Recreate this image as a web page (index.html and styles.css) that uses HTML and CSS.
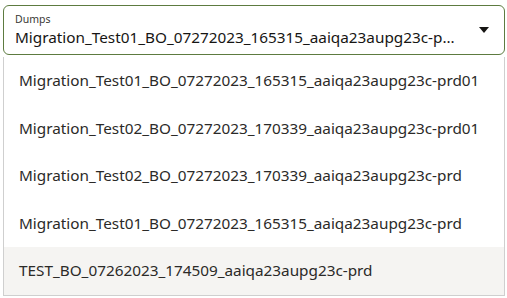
FILE: index.html
```html
<!DOCTYPE html>
<html lang="en">
<head>
    <meta charset="UTF-8">
    <title>Dumps</title>
    <link rel="stylesheet" href="styles.css">
</head>
<body>
    <!-- Campo select abierto -->
    <div class="select-field">
        <div class="select-text">
            <span class="select-label">Dumps</span>
            <span class="select-value">Migration_Test01_BO_07272023_165315_aaiqa23aupg23c-prd01</span>
        </div>
        <svg class="select-arrow" width="12" height="8" viewBox="0 0 12 8">
            <path d="M1 1 L11 1 L6 7 Z" fill="#161513"/>
        </svg>
    </div>

    <ul class="dropdown">
        <li>Migration_Test01_BO_07272023_165315_aaiqa23aupg23c-prd01</li>
        <li>Migration_Test02_BO_07272023_170339_aaiqa23aupg23c-prd01</li>
        <li>Migration_Test02_BO_07272023_170339_aaiqa23aupg23c-prd</li>
        <li>Migration_Test01_BO_07272023_165315_aaiqa23aupg23c-prd</li>
        <li class="active">TEST_BO_07262023_174509_aaiqa23aupg23c-prd</li>
    </ul>
</body>
</html>
```

FILE: styles.css
```css
body {
    margin: 0;
    padding: 5px 2px 0 3px;
    font-family: "Noto Sans", sans-serif;
    color: #161513;
    background-color: #fff;
}

.select-field {
    display: flex;
    align-items: center;
    height: 48px;
    padding: 0 14px 0 11px;
    border: 1px solid #5d7b40;
    border-radius: 6px;
}

.select-text {
    flex: 1;
    min-width: 0;
    display: flex;
    flex-direction: column;
}

.select-label {
    font-size: 10.5px;
    line-height: 14px;
    color: #3a3936;
}

.select-value {
    font-size: 15.3px;
    line-height: 22px;
    white-space: nowrap;
    overflow: hidden;
    text-overflow: ellipsis;
    padding-right: 22px;
}

.select-arrow {
    flex: none;
}

.dropdown {
    list-style: none;
    margin: 2px 0 0 0;
    padding: 0;
    border: 1px solid #cfcfcf;
    border-top: none;
}

.dropdown li {
    height: 47.5px;
    line-height: 47.5px;
    padding-left: 15px;
    font-size: 15.3px;
    white-space: nowrap;
    color: #2b2a28;
}

.dropdown li.active {
    background-color: #f5f4f2;
}
```
